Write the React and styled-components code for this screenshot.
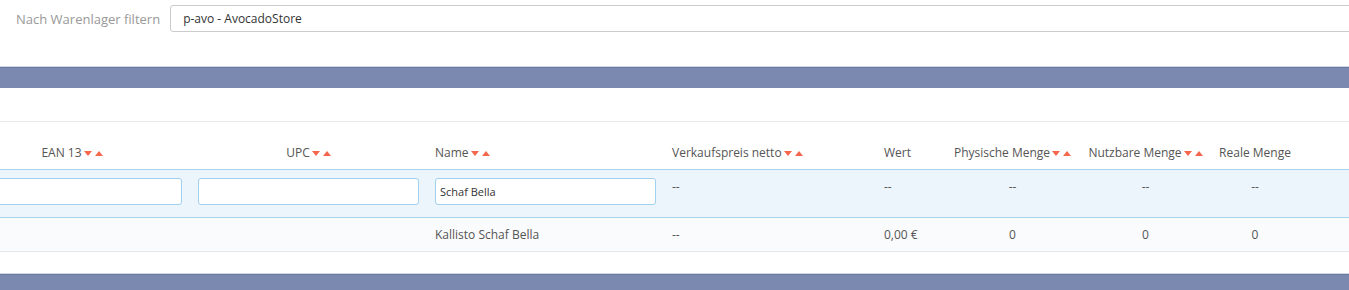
import styled, { createGlobalStyle } from "styled-components"

const Global = createGlobalStyle`
    body {
        margin: 0;
        background: #fff;
        font-family: "Open Sans", "Liberation Sans", sans-serif;
        font-size: 12px;
        color: #555;
    }
`

const Page = styled.div`
    width: 100%;
    height: 290px;
    overflow: hidden;
`

const FilterBar = styled.div`
    display: flex;
    align-items: center;
    gap: 10px;
    padding: 5px 0 0 16px;
    margin-right: -30px;
`

const FilterLabel = styled.label`
    color: #999;
    font-size: 13px;
    white-space: nowrap;
`

const Select = styled.div`
    flex: 1;
    height: 25px;
    line-height: 25px;
    border: 1px solid #ccc;
    border-radius: 3px;
    padding-left: 12px;
    color: #333;
    font-size: 12px;
`

const Band = styled.div`
    margin-top: ${(p) => p.$top || 0}px;
    height: 20px;
    background: #7b89b1;
    border-top: 1px solid #6b79a0;
    box-shadow: 0 -1px 0 #d3d7e6;
`

const Spacer = styled.div`
    height: 33px;
    border-bottom: 1px solid #eaeaea;
`

const TableWrap = styled.div`
    overflow: hidden;
`

const Table = styled.table`
    table-layout: fixed;
    border-collapse: collapse;
    margin-left: -46px;
    width: calc(100% + 46px);
`

const Th = styled.th`
    height: 40px;
    padding: 0 8px 7px;
    vertical-align: bottom;
    font-weight: 400;
    line-height: 18px;
    color: #555;
    white-space: nowrap;
    text-align: ${(p) => p.$align || "left"};
`

const FilterRow = styled.tr`
    background: #ecf5fb;
    border-top: 1px solid #a9d3ea;
    border-bottom: 1px solid #a9d3ea;
`

const FilterCell = styled.td`
    height: 39px;
    padding: 8px 8px 0;
    vertical-align: top;
    line-height: 18px;
    text-align: ${(p) => p.$align || "left"};
`

const Input = styled.input`
    box-sizing: border-box;
    display: block;
    width: 100%;
    height: 27px;
    border: 1px solid #9fd0ee;
    border-radius: 3px;
    background: #fff;
    padding: 0 4px;
    font-family: "Open Sans", "Liberation Sans", sans-serif;
    font-size: 11px;
    color: #333;
    outline: none;
`

const DataRow = styled.tr`
    background: #fafbfd;
    border-bottom: 1px solid #e6e6e6;
`

const Cell = styled.td`
    height: 33px;
    padding: 0 8px;
    line-height: 18px;
    vertical-align: middle;
    white-space: nowrap;
    text-align: ${(p) => p.$align || "left"};
`

const Sort = styled.span`
    display: inline-flex;
    align-items: center;
    gap: 3px;
    margin-left: 2px;
    vertical-align: 1px;
`

const Down = styled.span`
    width: 0;
    height: 0;
    border-left: 4px solid transparent;
    border-right: 4px solid transparent;
    border-top: 5px solid #f4674c;
`

const Up = styled.span`
    width: 0;
    height: 0;
    border-left: 4px solid transparent;
    border-right: 4px solid transparent;
    border-bottom: 5px solid #f4674c;
`

const SortArrows = () => (
    <Sort>
        <Down />
        <Up />
    </Sort>
)

const columns = [
    { label: "EAN 13", width: 236, align: "center", sort: true, input: "" },
    { label: "UPC", width: 237, align: "center", sort: true, input: "" },
    { label: "Name", width: 237, sort: true, input: "Schaf Bella", value: "Kallisto Schaf Bella" },
    { label: "Verkaufspreis netto", width: 212, sort: true, filter: "--", value: "--" },
    { label: "Wert", width: 69, filter: "--", value: "0,00 €" },
    { label: "Physische Menge", width: 135, align: "center", sort: true, filter: "--", value: "0" },
    { label: "Nutzbare Menge", width: 131, align: "center", sort: true, filter: "--", value: "0" },
    { label: "Reale Menge", width: 88, align: "center", filter: "--", value: "0" },
]

const App = () => {
    return (
        <Page>
            <Global />
            <FilterBar>
                <FilterLabel>Nach Warenlager filtern</FilterLabel>
                <Select>p-avo - AvocadoStore</Select>
            </FilterBar>
            <Band $top={35} />
            <Spacer />
            <TableWrap>
                <Table>
                    <colgroup>
                        {columns.map((c) => <col key={c.label} style={{ width: c.width }} />)}
                        <col />
                    </colgroup>
                    <thead>
                        <tr>
                            {columns.map((c) => (
                                <Th key={c.label} $align={c.align}>
                                    {c.label}
                                    {c.sort && <SortArrows />}
                                </Th>
                            ))}
                            <Th />
                        </tr>
                    </thead>
                    <tbody>
                        <FilterRow>
                            {columns.map((c) => (
                                <FilterCell key={c.label} $align={c.align}>
                                    {c.input !== undefined
                                        ? <Input defaultValue={c.input} />
                                        : c.filter}
                                </FilterCell>
                            ))}
                            <FilterCell />
                        </FilterRow>
                        <DataRow>
                            {columns.map((c) => (
                                <Cell key={c.label} $align={c.input !== undefined ? "left" : c.align}>
                                    {c.value}
                                </Cell>
                            ))}
                            <Cell />
                        </DataRow>
                    </tbody>
                </Table>
            </TableWrap>
            <Band $top={22} />
        </Page>
    )
}

export default App
